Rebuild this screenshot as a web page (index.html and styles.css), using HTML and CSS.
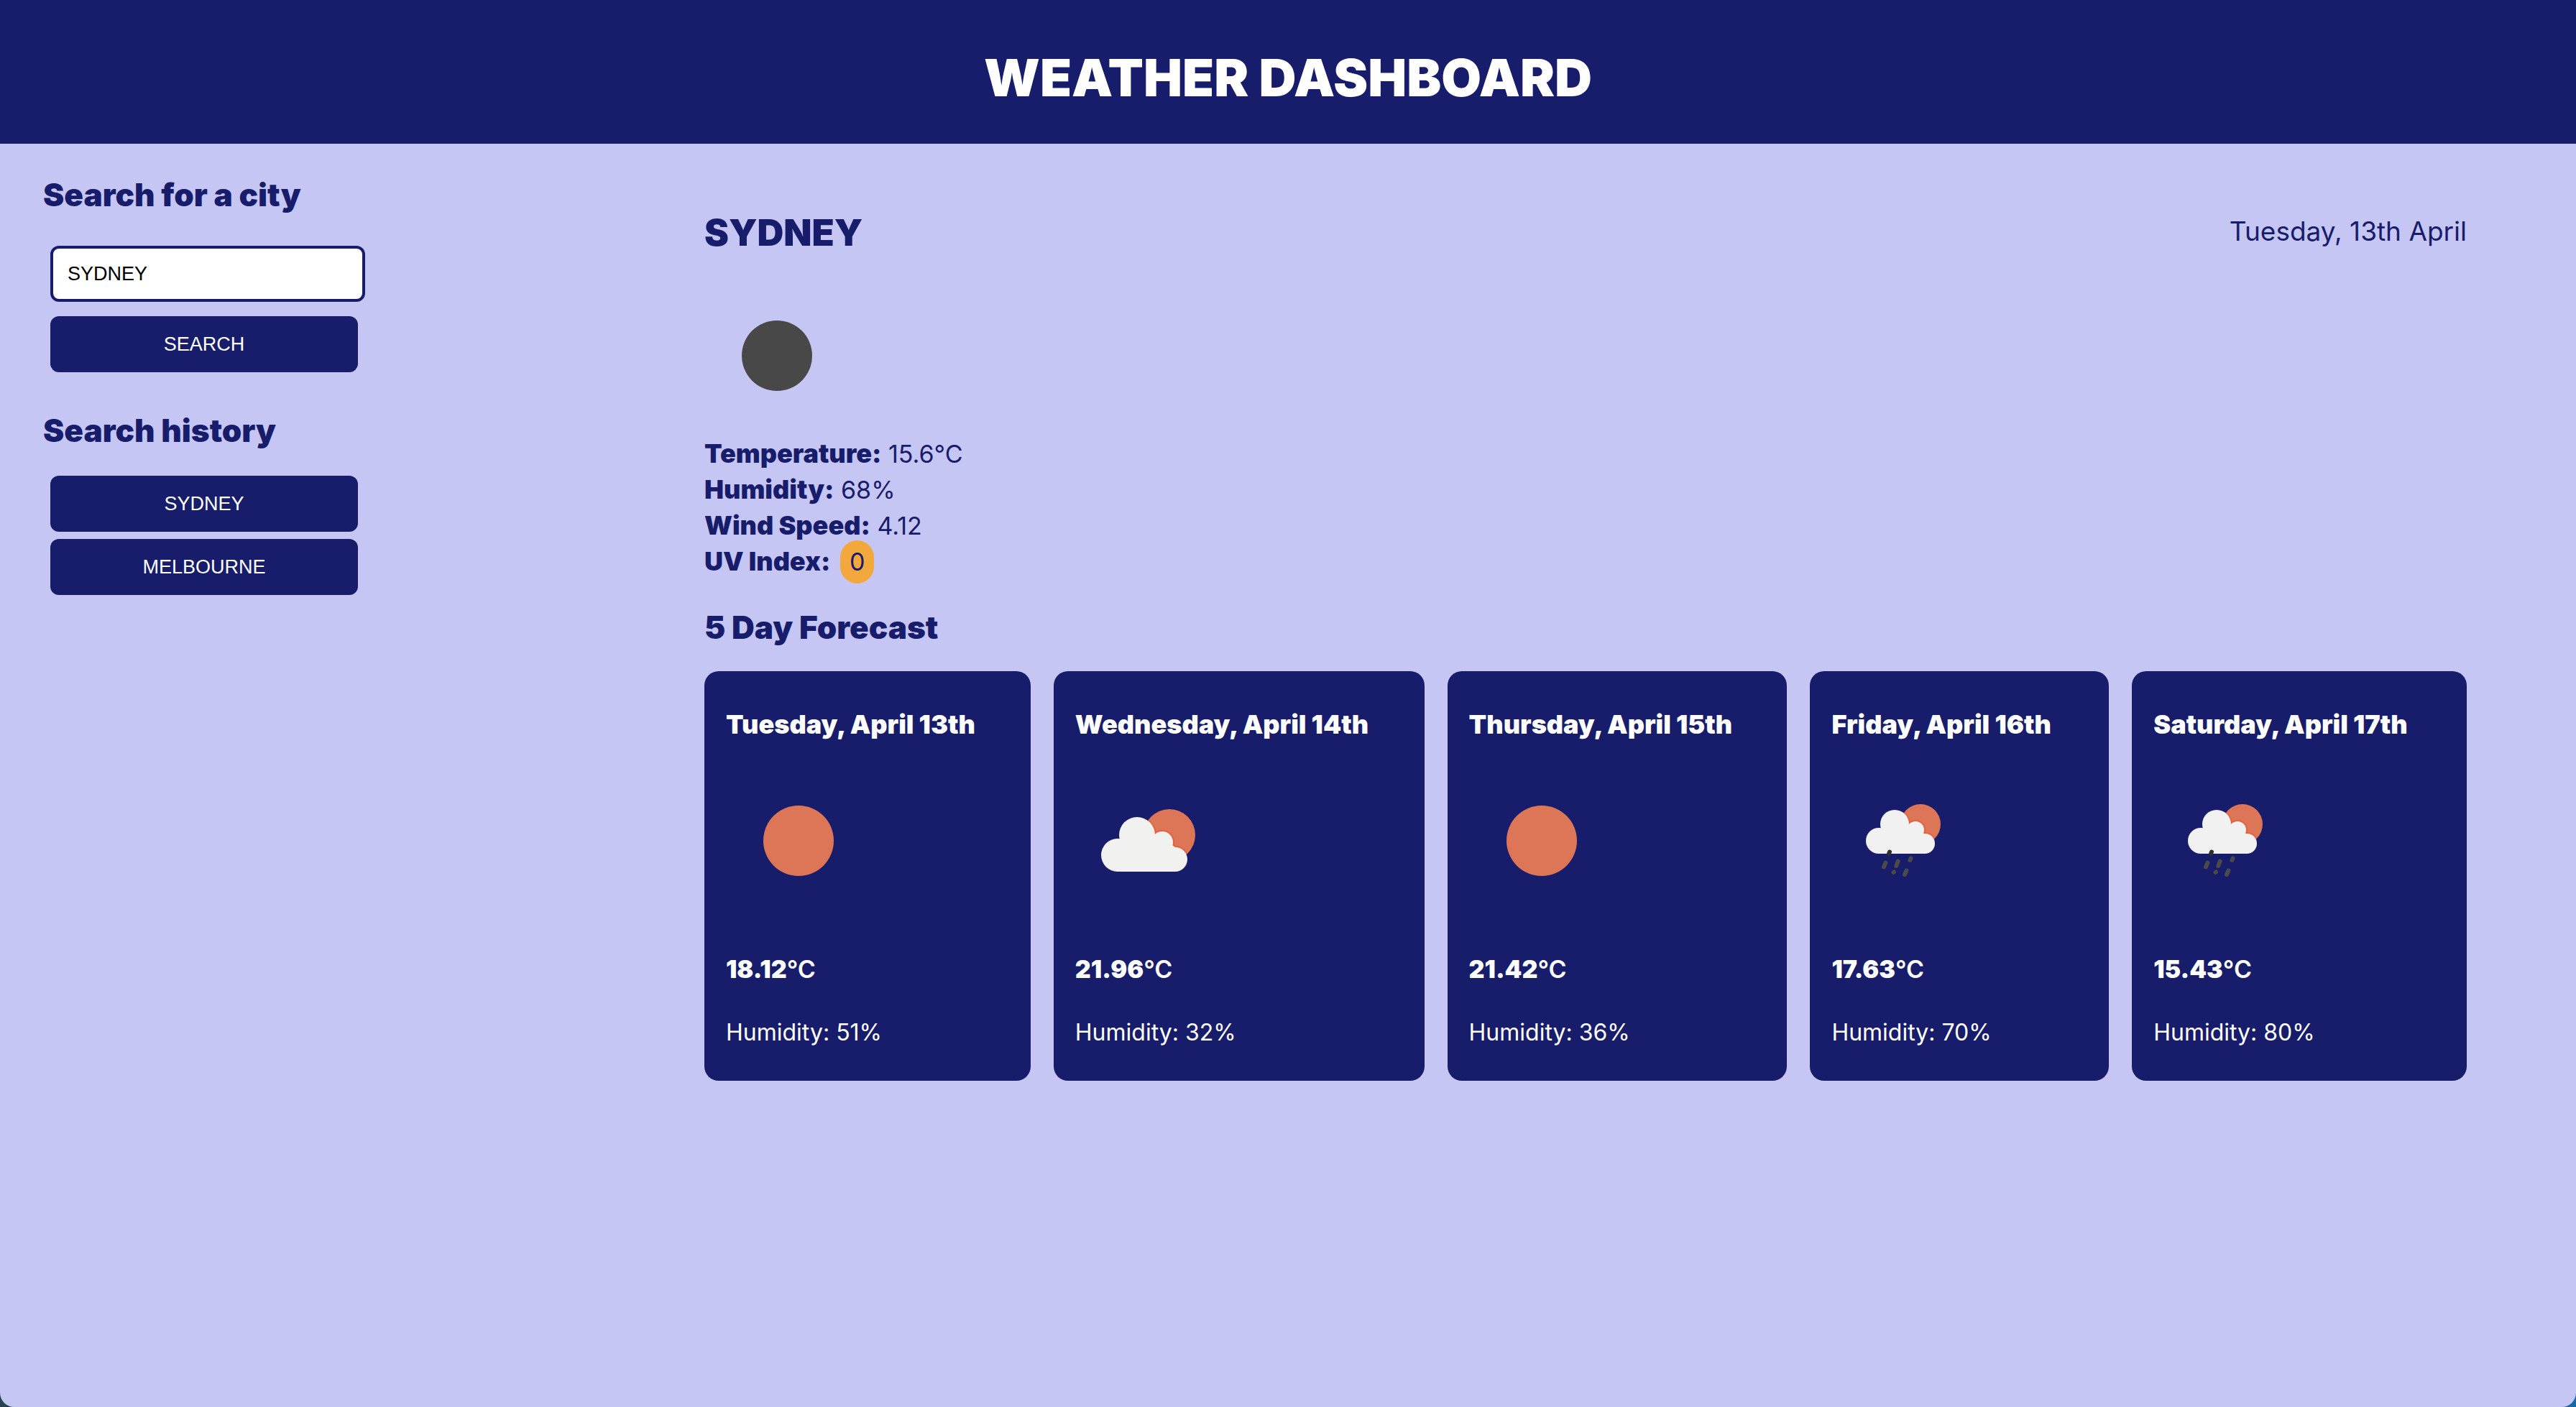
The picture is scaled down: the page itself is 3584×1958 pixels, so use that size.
FILE: index.html
```html
<!DOCTYPE html>
<html lang="en">
<head>
<meta charset="utf-8">
<meta name="viewport" content="width=device-width, initial-scale=1">
<title>Weather Dashboard</title>
<link rel="stylesheet" href="styles.css">
</head>
<body>
<svg class="sprite" aria-hidden="true">
  <defs>
    <clipPath id="sun-large"><circle cx="131" cy="92" r="36"/></clipPath>
    <clipPath id="sun-small"><circle cx="124" cy="77" r="28"/></clipPath>
    <g id="cloud-large">
      <circle cx="86" cy="92" r="25"/><circle cx="59" cy="120" r="23"/><circle cx="121" cy="102" r="15"/><circle cx="139" cy="126" r="17"/>
      <path d="M59 143V108L86 92L121 96L139 109V143Z"/>
    </g>
    <g id="cloud-small">
      <circle cx="88" cy="77" r="20"/><circle cx="66" cy="100" r="18"/><circle cx="117" cy="85" r="12"/><circle cx="130" cy="104" r="14"/>
      <path d="M66 118V90L88 77L117 80L130 91V118Z"/>
    </g>
    <symbol id="clear" viewBox="0 0 200 200"><circle cx="101" cy="100" r="49"/></symbol>
    <symbol id="cloudy" viewBox="0 0 200 200">
      <circle cx="131" cy="92" r="36" fill="#dd7657"/>
      <g clip-path="url(#sun-large)"><use href="#cloud-large" fill="#e4633f" stroke="#e4633f" stroke-width="4"/></g>
      <use href="#cloud-large" fill="#f1f1f0"/>
    </symbol>
    <symbol id="rain" viewBox="0 0 200 200">
      <circle cx="124" cy="77" r="28" fill="#dd7657"/>
      <g clip-path="url(#sun-small)"><use href="#cloud-small" fill="#e4633f" stroke="#e4633f" stroke-width="4"/></g>
      <use href="#cloud-small" fill="#f1f1f2"/>
      <g fill="none" stroke="#4a4a4a" stroke-width="6" stroke-linecap="round">
        <path d="M81 115.5L80 118" stroke="#303030"/>
        <path d="M75.3 130.5L73 136.5M92.7 128.5L90.3 135M110.5 124.5L109.5 127M87 143.5L86.5 144M104.5 141.5L102 147"/>
      </g>
    </symbol>
  </defs>
</svg>

<header class="header"><h1 class="title">WEATHER DASHBOARD</h1></header>

<div class="dashboard">
  <aside class="sidebar">
    <form class="search" onsubmit="return false">
      <h2 class="heading"><label for="city">Search for a city</label></h2>
      <input class="search-input" id="city" type="text" value="SYDNEY">
      <button class="button" type="submit">SEARCH</button>
    </form>
    <section class="history">
      <h2 class="heading">Search history</h2>
      <button class="button" type="button">SYDNEY</button>
      <button class="button" type="button">MELBOURNE</button>
    </section>
  </aside>

  <main class="main">
    <section class="current">
      <div class="current-top">
        <h2 class="city">SYDNEY</h2>
        <p class="today">Tuesday, 13th April</p>
      </div>
      <svg class="icon moon" role="img" aria-label="Clear night"><use href="#clear"/></svg>
      <ul class="stats">
        <li><b>Temperature:</b> 15.6°C</li>
        <li><b>Humidity:</b> 68%</li>
        <li><b>Wind Speed:</b> 4.12</li>
        <li><b>UV Index:</b> <span class="uv">0</span></li>
      </ul>
    </section>

    <section class="forecast">
      <h2 class="heading">5 Day Forecast</h2>
      <div class="cards">
        <article class="card">
          <h3 class="card-date">Tuesday, April 13th</h3>
          <svg class="icon sun" role="img" aria-label="Clear"><use href="#clear"/></svg>
          <p class="temp">18.12<span class="unit">°C</span></p>
          <p class="humidity">Humidity: 51%</p>
        </article>
        <article class="card">
          <h3 class="card-date">Wednesday, April 14th</h3>
          <svg class="icon" role="img" aria-label="Partly cloudy"><use href="#cloudy"/></svg>
          <p class="temp">21.96<span class="unit">°C</span></p>
          <p class="humidity">Humidity: 32%</p>
        </article>
        <article class="card">
          <h3 class="card-date">Thursday, April 15th</h3>
          <svg class="icon sun" role="img" aria-label="Clear"><use href="#clear"/></svg>
          <p class="temp">21.42<span class="unit">°C</span></p>
          <p class="humidity">Humidity: 36%</p>
        </article>
        <article class="card">
          <h3 class="card-date">Friday, April 16th</h3>
          <svg class="icon" role="img" aria-label="Rain"><use href="#rain"/></svg>
          <p class="temp">17.63<span class="unit">°C</span></p>
          <p class="humidity">Humidity: 70%</p>
        </article>
        <article class="card">
          <h3 class="card-date">Saturday, April 17th</h3>
          <svg class="icon" role="img" aria-label="Rain"><use href="#rain"/></svg>
          <p class="temp">15.43<span class="unit">°C</span></p>
          <p class="humidity">Humidity: 80%</p>
        </article>
      </div>
    </section>
  </main>
</div>
</body>
</html>
```
FILE: styles.css
```css
:root {
  --navy: #171c6b;
  --lilac: #c6c6f4;
  --amber: #f2a83d;
}

* { box-sizing: border-box; }

html { background: linear-gradient(90deg, #24434f, #1768a8); }

body {
  margin: 0;
  min-height: 100vh;
  border-radius: 0 0 20px 20px;
  background: var(--lilac);
  color: var(--navy);
  font-family: Inter, "Liberation Sans", sans-serif;
  font-size: 34px;
}

h1, h2, h3, p, ul { margin: 0; padding: 0; }

.sprite { position: absolute; width: 0; height: 0; }

.header {
  padding: 68px 32px 52px;
  background: var(--navy);
  color: #fff;
  text-align: center;
}

.title { font-size: 72px; line-height: 80px; font-weight: 900; }

.dashboard {
  display: grid;
  grid-template-columns: 1fr 3fr;
}

.sidebar { padding: 47px 60px; }

.search, .history {
  display: flex;
  flex-direction: column;
  align-items: flex-start;
}

.heading { font-size: 44px; line-height: 48px; font-weight: 900; }

.history { margin-top: 57px; }
.history .heading { margin-bottom: 39px; }
.history .button + .button { margin-top: 10px; }

.search-input, .button {
  height: 78px;
  margin: 0 0 0 10px;
  border-radius: 12px;
  font-family: "Liberation Sans", Arial, sans-serif;
  font-size: 27px;
}

.search-input {
  width: 438px;
  margin-top: 47px;
  margin-bottom: 20px;
  padding: 0 20px;
  border: 4px solid var(--navy);
  background: #fff;
  color: #000;
}

.button {
  width: 428px;
  padding: 0 20px;
  border: 0;
  background: var(--navy);
  color: #fff;
}

.main { padding: 94px 152px 48px 84px; }

.current-top {
  display: flex;
  justify-content: space-between;
  align-items: flex-start;
  margin-bottom: 41px;
}

.city { font-size: 51px; line-height: 60px; font-weight: 900; }
.today { font-size: 37px; line-height: 56px; }

.icon { display: block; width: 200px; height: 200px; }
.moon { fill: #484849; }
.sun { fill: #dd7657; }

.stats {
  margin-top: 12px;
  list-style: none;
  line-height: 50px;
}
.stats b { font-size: 36px; line-height: 40px; font-weight: 900; }

.uv {
  display: inline-block;
  margin: -5px 0 -5px 4px;
  padding: 5px 13px;
  border-radius: 24px;
  background: var(--amber);
}

.forecast { margin-top: 42px; }

.cards {
  display: grid;
  grid-template-columns: 454fr 516fr 473fr 416fr 466fr;
  gap: 32px;
  margin-top: 37px;
}

.card {
  padding: 50px 30px 47px;
  border-radius: 20px;
  background: var(--navy);
  color: #fff;
}

.card-date {
  margin-bottom: 38px;
  font-size: 36px;
  line-height: 48px;
  font-weight: 900;
  white-space: nowrap;
}

.temp { margin-top: 55px; font-size: 34px; line-height: 48px; font-weight: 900; }
.unit { font-weight: 600; }
.humidity { margin-top: 44px; font-size: 32px; line-height: 40px; }
```
